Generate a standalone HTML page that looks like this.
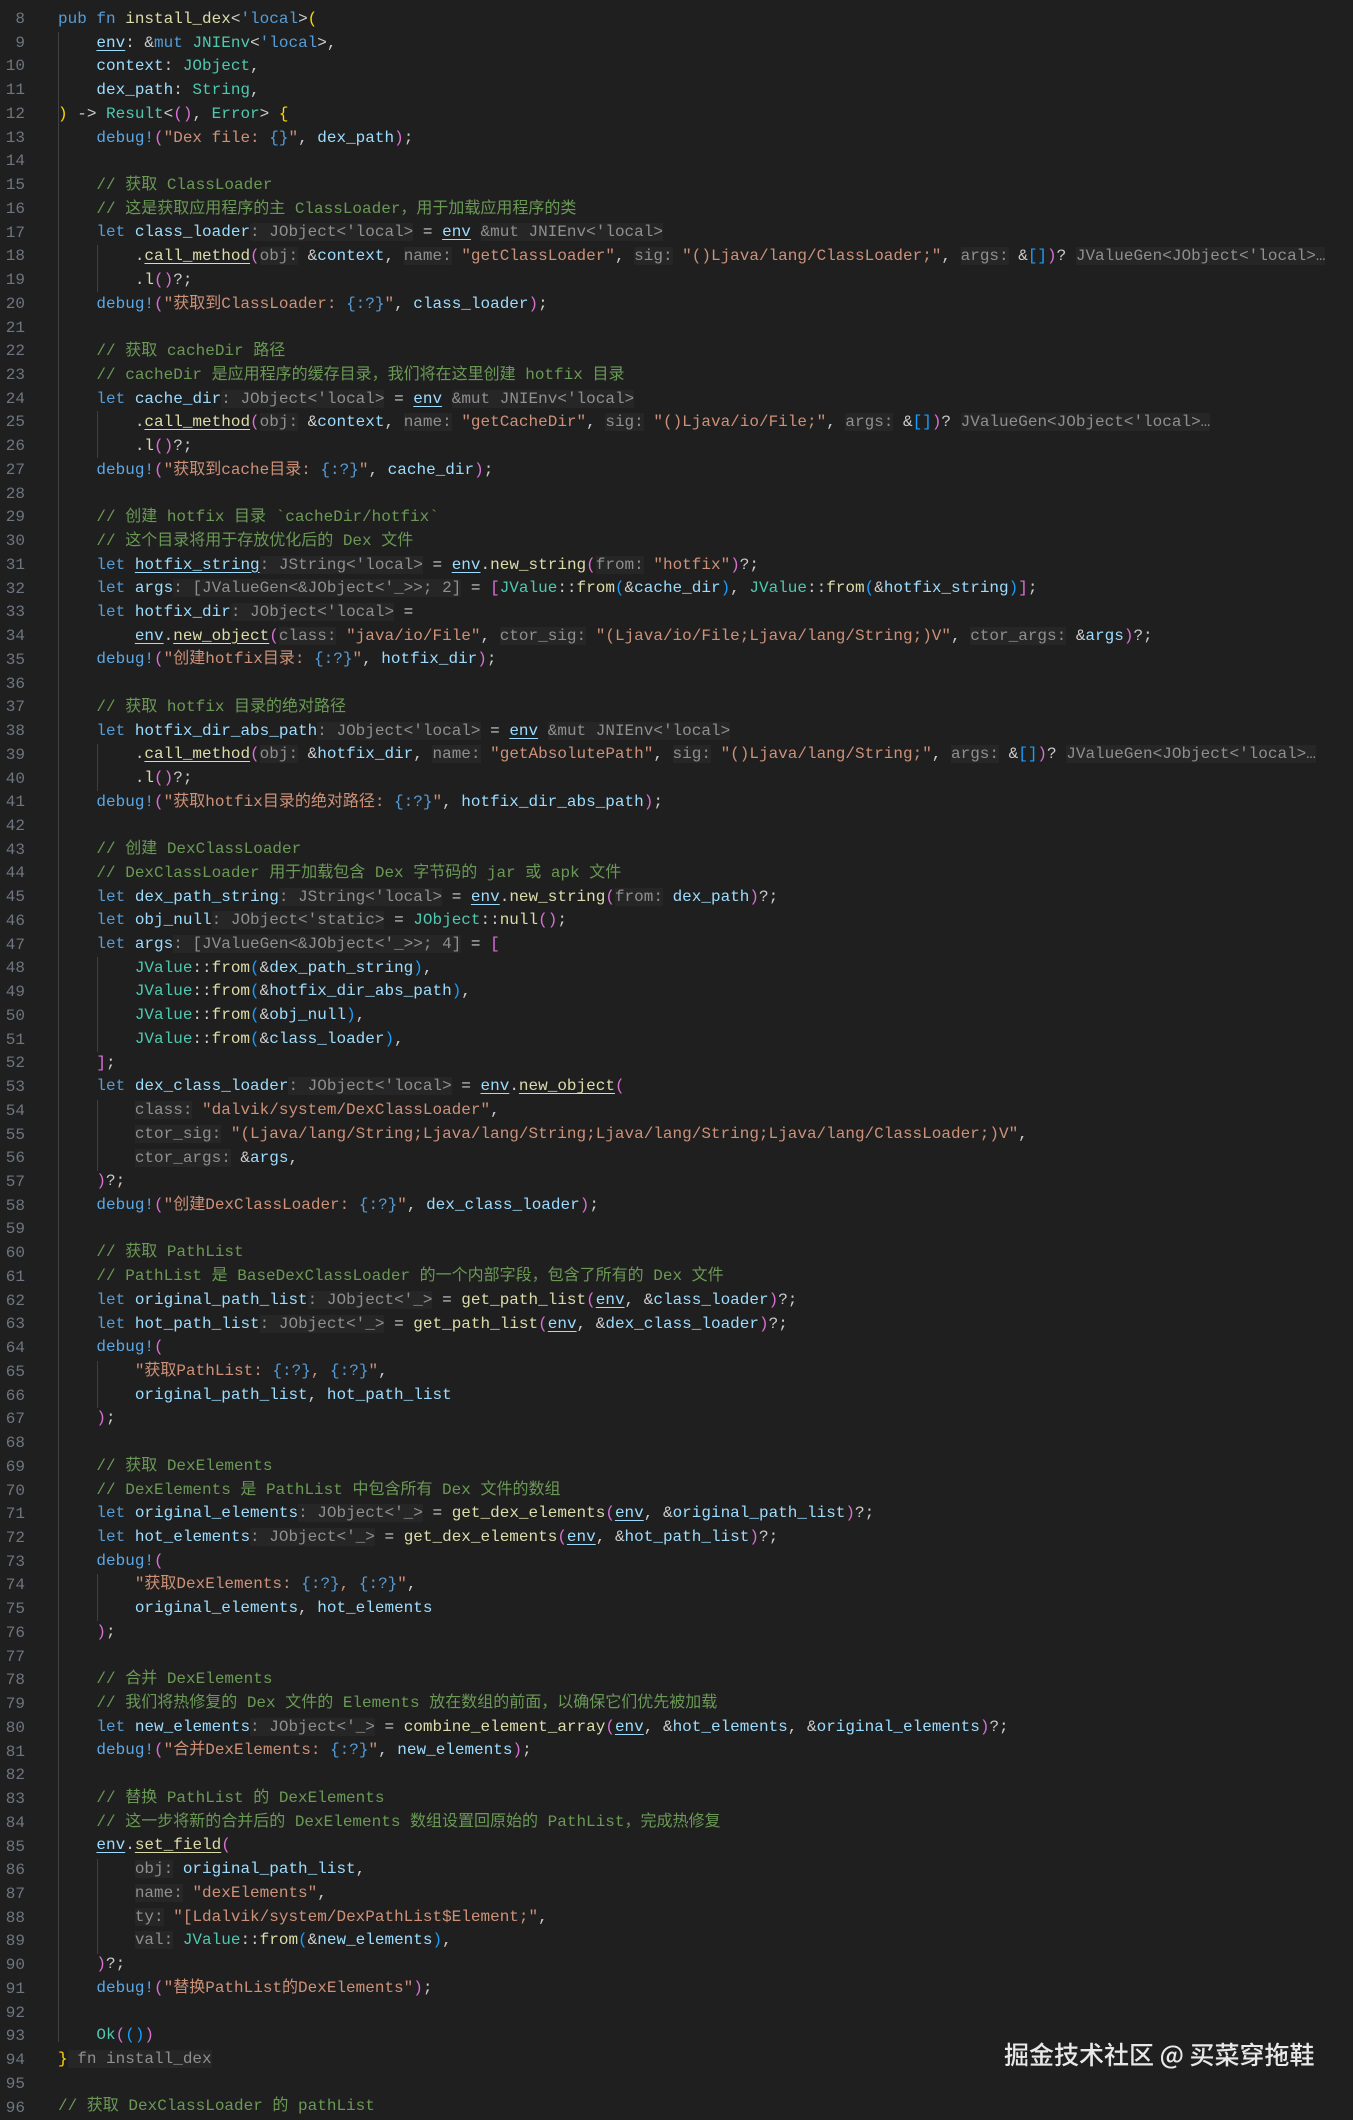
<!DOCTYPE html>
<html><head><meta charset="utf-8">
<style>
html,body{margin:0;padding:0;background:#1f1f1f;}
body{width:1353px;height:2109px;overflow:hidden;position:relative;font-family:"Liberation Mono","Noto Sans CJK SC",monospace;font-size:16px;}
#nums{position:absolute;left:0;top:8px;width:25px;text-align:right;color:#6e7681;line-height:23.73px;white-space:pre;}
#code{position:absolute;left:58px;top:8px;right:0;line-height:23.73px;color:#cccccc;}
#code div{height:23.73px;overflow:hidden;white-space:pre;}
.g{position:absolute;width:1px;background:#404040;}
.k{color:#569cd6}.v{color:#9cdcfe}.f{color:#dcdcaa}.t{color:#4ec9b0}.s{color:#ce9178}.c{color:#6a9955}.m{color:#5aa8e6}
.h{color:#8f8f8f;background:#262626}.y{color:#ffd700}.p{color:#da70d6}.b{color:#179fff}.u{text-decoration:underline;text-underline-offset:3px}
#wm{position:absolute;left:1004px;top:2036px;font-family:"Noto Sans CJK SC","WenQuanYi Zen Hei",sans-serif;font-size:25px;color:#e8e8e8;font-weight:500;}
</style></head><body>
<div class="g" style="left:58px;top:32px;height:2010px"></div>
<div class="g" style="left:97px;top:245px;height:47px"></div>
<div class="g" style="left:97px;top:411px;height:47px"></div>
<div class="g" style="left:97px;top:744px;height:47px"></div>
<div class="g" style="left:97px;top:957px;height:95px"></div>
<div class="g" style="left:97px;top:1100px;height:71px"></div>
<div class="g" style="left:97px;top:1361px;height:47px"></div>
<div class="g" style="left:97px;top:1574px;height:47px"></div>
<div class="g" style="left:97px;top:1859px;height:95px"></div>
<div id="nums"></div>
<div id="code"><div><span class="k">pub fn</span> <span class="f">install_dex</span>&lt;<span class="k">'local</span>&gt;<span class="y">(</span></div><div>    <span class="v u">env</span>: &amp;<span class="k">mut</span> <span class="t">JNIEnv</span>&lt;<span class="k">'local</span>&gt;,</div><div>    <span class="v">context</span>: <span class="t">JObject</span>,</div><div>    <span class="v">dex_path</span>: <span class="t">String</span>,</div><div><span class="y">)</span> -&gt; <span class="t">Result</span>&lt;<span class="p">()</span>, <span class="t">Error</span>&gt; <span class="y">{</span></div><div>    <span class="m">debug!</span><span class="p">(</span><span class="s">"Dex file: </span><span class="k">{}</span><span class="s">"</span>, <span class="v">dex_path</span><span class="p">)</span>;</div><div> </div><div>    <span class="c">// 获取 ClassLoader</span></div><div>    <span class="c">// 这是获取应用程序的主 ClassLoader，用于加载应用程序的类</span></div><div>    <span class="k">let</span> <span class="v">class_loader</span><span class="h">: JObject&lt;'local&gt;</span> = <span class="v u">env</span> <span class="h">&amp;mut JNIEnv&lt;'local&gt;</span></div><div>        .<span class="f u">call_method</span><span class="p">(</span><span class="h">obj:</span> &amp;<span class="v">context</span>, <span class="h">name:</span> <span class="s">"getClassLoader"</span>, <span class="h">sig:</span> <span class="s">"()Ljava/lang/ClassLoader;"</span>, <span class="h">args:</span> &amp;<span class="b">[]</span><span class="p">)</span>? <span class="h">JValueGen&lt;JObject&lt;'local&gt;…</span></div><div>        .<span class="f">l</span><span class="p">()</span>?;</div><div>    <span class="m">debug!</span><span class="p">(</span><span class="s">"获取到ClassLoader: </span><span class="k">{:?}</span><span class="s">"</span>, <span class="v">class_loader</span><span class="p">)</span>;</div><div> </div><div>    <span class="c">// 获取 cacheDir 路径</span></div><div>    <span class="c">// cacheDir 是应用程序的缓存目录，我们将在这里创建 hotfix 目录</span></div><div>    <span class="k">let</span> <span class="v">cache_dir</span><span class="h">: JObject&lt;'local&gt;</span> = <span class="v u">env</span> <span class="h">&amp;mut JNIEnv&lt;'local&gt;</span></div><div>        .<span class="f u">call_method</span><span class="p">(</span><span class="h">obj:</span> &amp;<span class="v">context</span>, <span class="h">name:</span> <span class="s">"getCacheDir"</span>, <span class="h">sig:</span> <span class="s">"()Ljava/io/File;"</span>, <span class="h">args:</span> &amp;<span class="b">[]</span><span class="p">)</span>? <span class="h">JValueGen&lt;JObject&lt;'local&gt;…</span></div><div>        .<span class="f">l</span><span class="p">()</span>?;</div><div>    <span class="m">debug!</span><span class="p">(</span><span class="s">"获取到cache目录: </span><span class="k">{:?}</span><span class="s">"</span>, <span class="v">cache_dir</span><span class="p">)</span>;</div><div> </div><div>    <span class="c">// 创建 hotfix 目录 `cacheDir/hotfix`</span></div><div>    <span class="c">// 这个目录将用于存放优化后的 Dex 文件</span></div><div>    <span class="k">let</span> <span class="v u">hotfix_string</span><span class="h">: JString&lt;'local&gt;</span> = <span class="v u">env</span>.<span class="f">new_string</span><span class="p">(</span><span class="h">from:</span> <span class="s">"hotfix"</span><span class="p">)</span>?;</div><div>    <span class="k">let</span> <span class="v">args</span><span class="h">: [JValueGen&lt;&amp;JObject&lt;'_&gt;&gt;; 2]</span> = <span class="p">[</span><span class="t">JValue</span>::<span class="f">from</span><span class="b">(</span>&amp;<span class="v">cache_dir</span><span class="b">)</span>, <span class="t">JValue</span>::<span class="f">from</span><span class="b">(</span>&amp;<span class="v">hotfix_string</span><span class="b">)</span><span class="p">]</span>;</div><div>    <span class="k">let</span> <span class="v">hotfix_dir</span><span class="h">: JObject&lt;'local&gt;</span> =</div><div>        <span class="v u">env</span>.<span class="f u">new_object</span><span class="p">(</span><span class="h">class:</span> <span class="s">"java/io/File"</span>, <span class="h">ctor_sig:</span> <span class="s">"(Ljava/io/File;Ljava/lang/String;)V"</span>, <span class="h">ctor_args:</span> &amp;<span class="v">args</span><span class="p">)</span>?;</div><div>    <span class="m">debug!</span><span class="p">(</span><span class="s">"创建hotfix目录: </span><span class="k">{:?}</span><span class="s">"</span>, <span class="v">hotfix_dir</span><span class="p">)</span>;</div><div> </div><div>    <span class="c">// 获取 hotfix 目录的绝对路径</span></div><div>    <span class="k">let</span> <span class="v">hotfix_dir_abs_path</span><span class="h">: JObject&lt;'local&gt;</span> = <span class="v u">env</span> <span class="h">&amp;mut JNIEnv&lt;'local&gt;</span></div><div>        .<span class="f u">call_method</span><span class="p">(</span><span class="h">obj:</span> &amp;<span class="v">hotfix_dir</span>, <span class="h">name:</span> <span class="s">"getAbsolutePath"</span>, <span class="h">sig:</span> <span class="s">"()Ljava/lang/String;"</span>, <span class="h">args:</span> &amp;<span class="b">[]</span><span class="p">)</span>? <span class="h">JValueGen&lt;JObject&lt;'local&gt;…</span></div><div>        .<span class="f">l</span><span class="p">()</span>?;</div><div>    <span class="m">debug!</span><span class="p">(</span><span class="s">"获取hotfix目录的绝对路径: </span><span class="k">{:?}</span><span class="s">"</span>, <span class="v">hotfix_dir_abs_path</span><span class="p">)</span>;</div><div> </div><div>    <span class="c">// 创建 DexClassLoader</span></div><div>    <span class="c">// DexClassLoader 用于加载包含 Dex 字节码的 jar 或 apk 文件</span></div><div>    <span class="k">let</span> <span class="v">dex_path_string</span><span class="h">: JString&lt;'local&gt;</span> = <span class="v u">env</span>.<span class="f">new_string</span><span class="p">(</span><span class="h">from:</span> <span class="v">dex_path</span><span class="p">)</span>?;</div><div>    <span class="k">let</span> <span class="v">obj_null</span><span class="h">: JObject&lt;'static&gt;</span> = <span class="t">JObject</span>::<span class="f">null</span><span class="p">()</span>;</div><div>    <span class="k">let</span> <span class="v">args</span><span class="h">: [JValueGen&lt;&amp;JObject&lt;'_&gt;&gt;; 4]</span> = <span class="p">[</span></div><div>        <span class="t">JValue</span>::<span class="f">from</span><span class="b">(</span>&amp;<span class="v">dex_path_string</span><span class="b">)</span>,</div><div>        <span class="t">JValue</span>::<span class="f">from</span><span class="b">(</span>&amp;<span class="v">hotfix_dir_abs_path</span><span class="b">)</span>,</div><div>        <span class="t">JValue</span>::<span class="f">from</span><span class="b">(</span>&amp;<span class="v">obj_null</span><span class="b">)</span>,</div><div>        <span class="t">JValue</span>::<span class="f">from</span><span class="b">(</span>&amp;<span class="v">class_loader</span><span class="b">)</span>,</div><div>    <span class="p">]</span>;</div><div>    <span class="k">let</span> <span class="v">dex_class_loader</span><span class="h">: JObject&lt;'local&gt;</span> = <span class="v u">env</span>.<span class="f u">new_object</span><span class="p">(</span></div><div>        <span class="h">class:</span> <span class="s">"dalvik/system/DexClassLoader"</span>,</div><div>        <span class="h">ctor_sig:</span> <span class="s">"(Ljava/lang/String;Ljava/lang/String;Ljava/lang/String;Ljava/lang/ClassLoader;)V"</span>,</div><div>        <span class="h">ctor_args:</span> &amp;<span class="v">args</span>,</div><div>    <span class="p">)</span>?;</div><div>    <span class="m">debug!</span><span class="p">(</span><span class="s">"创建DexClassLoader: </span><span class="k">{:?}</span><span class="s">"</span>, <span class="v">dex_class_loader</span><span class="p">)</span>;</div><div> </div><div>    <span class="c">// 获取 PathList</span></div><div>    <span class="c">// PathList 是 BaseDexClassLoader 的一个内部字段，包含了所有的 Dex 文件</span></div><div>    <span class="k">let</span> <span class="v">original_path_list</span><span class="h">: JObject&lt;'_&gt;</span> = <span class="f">get_path_list</span><span class="p">(</span><span class="v u">env</span>, &amp;<span class="v">class_loader</span><span class="p">)</span>?;</div><div>    <span class="k">let</span> <span class="v">hot_path_list</span><span class="h">: JObject&lt;'_&gt;</span> = <span class="f">get_path_list</span><span class="p">(</span><span class="v u">env</span>, &amp;<span class="v">dex_class_loader</span><span class="p">)</span>?;</div><div>    <span class="m">debug!</span><span class="p">(</span></div><div>        <span class="s">"获取PathList: </span><span class="k">{:?}</span><span class="s">, </span><span class="k">{:?}</span><span class="s">"</span>,</div><div>        <span class="v">original_path_list</span>, <span class="v">hot_path_list</span></div><div>    <span class="p">)</span>;</div><div> </div><div>    <span class="c">// 获取 DexElements</span></div><div>    <span class="c">// DexElements 是 PathList 中包含所有 Dex 文件的数组</span></div><div>    <span class="k">let</span> <span class="v">original_elements</span><span class="h">: JObject&lt;'_&gt;</span> = <span class="f">get_dex_elements</span><span class="p">(</span><span class="v u">env</span>, &amp;<span class="v">original_path_list</span><span class="p">)</span>?;</div><div>    <span class="k">let</span> <span class="v">hot_elements</span><span class="h">: JObject&lt;'_&gt;</span> = <span class="f">get_dex_elements</span><span class="p">(</span><span class="v u">env</span>, &amp;<span class="v">hot_path_list</span><span class="p">)</span>?;</div><div>    <span class="m">debug!</span><span class="p">(</span></div><div>        <span class="s">"获取DexElements: </span><span class="k">{:?}</span><span class="s">, </span><span class="k">{:?}</span><span class="s">"</span>,</div><div>        <span class="v">original_elements</span>, <span class="v">hot_elements</span></div><div>    <span class="p">)</span>;</div><div> </div><div>    <span class="c">// 合并 DexElements</span></div><div>    <span class="c">// 我们将热修复的 Dex 文件的 Elements 放在数组的前面，以确保它们优先被加载</span></div><div>    <span class="k">let</span> <span class="v">new_elements</span><span class="h">: JObject&lt;'_&gt;</span> = <span class="f">combine_element_array</span><span class="p">(</span><span class="v u">env</span>, &amp;<span class="v">hot_elements</span>, &amp;<span class="v">original_elements</span><span class="p">)</span>?;</div><div>    <span class="m">debug!</span><span class="p">(</span><span class="s">"合并DexElements: </span><span class="k">{:?}</span><span class="s">"</span>, <span class="v">new_elements</span><span class="p">)</span>;</div><div> </div><div>    <span class="c">// 替换 PathList 的 DexElements</span></div><div>    <span class="c">// 这一步将新的合并后的 DexElements 数组设置回原始的 PathList，完成热修复</span></div><div>    <span class="v u">env</span>.<span class="f u">set_field</span><span class="p">(</span></div><div>        <span class="h">obj:</span> <span class="v">original_path_list</span>,</div><div>        <span class="h">name:</span> <span class="s">"dexElements"</span>,</div><div>        <span class="h">ty:</span> <span class="s">"[Ldalvik/system/DexPathList$Element;"</span>,</div><div>        <span class="h">val:</span> <span class="t">JValue</span>::<span class="f">from</span><span class="b">(</span>&amp;<span class="v">new_elements</span><span class="b">)</span>,</div><div>    <span class="p">)</span>?;</div><div>    <span class="m">debug!</span><span class="p">(</span><span class="s">"替换PathList的DexElements"</span><span class="p">)</span>;</div><div> </div><div>    <span class="t">Ok</span><span class="p">(</span><span class="b">()</span><span class="p">)</span></div><div><span class="y">}</span><span class="h"> fn install_dex</span></div><div> </div><div><span class="c">// 获取 DexClassLoader 的 pathList</span></div></div>
<div id="wm">掘金技术社区 @ 买菜穿拖鞋</div>
<script>
var n=document.getElementById('nums'),s='';for(var i=8;i<=96;i++)s+=i+(i<96?'\n':'');n.textContent=s;
</script>
</body></html>
